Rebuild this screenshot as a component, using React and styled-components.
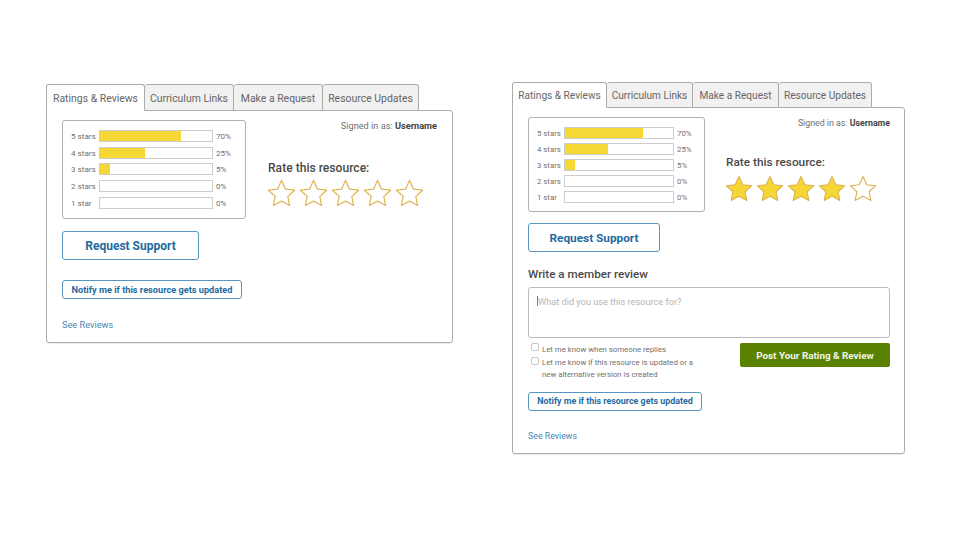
import React from "react";
import styled, { createGlobalStyle } from "styled-components";

const GlobalStyle = createGlobalStyle`
  html, body {
    margin: 0;
    background: #fff;
    font-family: Roboto, "Liberation Sans", sans-serif;
    color: #555;
  }
`;

const Page = styled.div`
  display: flex;
  align-items: flex-start;
  width: 960px;
  height: 540px;
  overflow: hidden;
`;

const Widget = styled.section`
  width: ${(p) => (p.$wide ? 393 : 407)}px;
  margin-left: ${(p) => (p.$wide ? 59 : 46)}px;
  margin-top: ${(p) => (p.$wide ? 82 : 84)}px;
`;

const Tabs = styled.div`
  display: flex;
  height: ${(p) => (p.$wide ? 26 : 27)}px;
  position: relative;
  z-index: 1;
  margin-bottom: -1px;
`;

const Tab = styled.div`
  box-sizing: border-box;
  width: ${(p) => p.$w}px;
  padding-top: 1px;
  display: flex;
  align-items: center;
  justify-content: center;
  font-size: ${(p) => (p.$wide ? 10.15 : 10.45)}px;
  color: #666;
  border: 1px solid #ababab;
  border-left-width: ${(p) => (p.$first ? 1 : 0)}px;
  border-radius: 3px 3px 0 0;
  background: ${(p) => (p.$active ? "#fff" : "#f1f1f1")};
  border-bottom-color: ${(p) => (p.$active ? "#fff" : "#ababab")};
`;

const Panel = styled.div`
  box-sizing: border-box;
  height: ${(p) => (p.$wide ? 347 : 233)}px;
  border: 1px solid #ababab;
  border-radius: 0 3px 3px 3px;
  box-shadow: 0 1px 1px rgba(0, 0, 0, 0.08);
  padding: ${(p) => (p.$wide ? "9px 14px 0 15px" : "9px 15px 0 15px")};
`;

const TopRow = styled.div`
  display: flex;
  align-items: flex-start;
`;

const StatsBox = styled.div`
  box-sizing: border-box;
  flex: none;
  width: ${(p) => (p.$wide ? 177 : 184)}px;
  height: ${(p) => (p.$wide ? 95 : 99)}px;
  border: 1px solid #b0b0b0;
  border-radius: 3px;
  padding: 7px 0 0 8px;
`;

const StatRow = styled.div`
  display: flex;
  align-items: center;
  height: ${(p) => (p.$wide ? 16 : 16.6)}px;
  font-size: ${(p) => (p.$wide ? 7.8 : 8.1)}px;
  color: #707070;
`;

const StatLabel = styled.span`
  width: ${(p) => (p.$wide ? 27 : 28)}px;
  flex: none;
`;

const BarTrack = styled.div`
  box-sizing: border-box;
  width: ${(p) => (p.$wide ? 110 : 114)}px;
  height: 12px;
  flex: none;
  border: 1px solid #cdcdcd;
  background: #fff;
`;

const BarFill = styled.div`
  height: 100%;
  background: #f5d835;
`;

const StatPct = styled.span`
  margin-left: 3px;
`;

const RateArea = styled.div`
  flex: 1;
  display: flex;
  flex-direction: column;
`;

const SignedIn = styled.div`
  align-self: flex-end;
  font-size: ${(p) => (p.$wide ? 8.8 : 9.2)}px;
  line-height: 12px;
  color: #707070;

  b {
    color: #444;
    font-weight: 700;
  }
`;

const RateTitle = styled.div`
  font-size: ${(p) => (p.$wide ? 11.8 : 12.1)}px;
  font-weight: 500;
  line-height: 16px;
  color: #4a4a4a;
  margin: ${(p) => (p.$wide ? "25px 0 5px 21px" : "28px 0 3px 22px")};
`;

const Stars = styled.div`
  display: flex;
  margin-left: ${(p) => (p.$wide ? 20 : 21)}px;
`;

const RequestButton = styled.div`
  box-sizing: border-box;
  width: ${(p) => (p.$wide ? 132 : 137)}px;
  height: 29px;
  margin-top: ${(p) => (p.$wide ? 11 : 12)}px;
  border: 1px solid #5896c0;
  border-radius: 3px;
  color: #1f6a9f;
  font-size: ${(p) => (p.$wide ? 11.8 : 12)}px;
  font-weight: 700;
  display: flex;
  align-items: center;
  justify-content: center;
`;

const NotifyButton = styled.div`
  box-sizing: border-box;
  width: ${(p) => (p.$wide ? 174 : 180)}px;
  height: 19px;
  margin-top: ${(p) => (p.$wide ? 9.5 : 20)}px;
  border: 1px solid #5896c0;
  border-radius: 3px;
  color: #1f6a9f;
  font-size: ${(p) => (p.$wide ? 8.9 : 9.2)}px;
  font-weight: 700;
  display: flex;
  align-items: center;
  justify-content: center;
`;

const SeeReviews = styled.div`
  font-size: ${(p) => (p.$wide ? 8.8 : 9.2)}px;
  line-height: 12px;
  color: #4a87b3;
  margin-top: ${(p) => (p.$wide ? 19 : 20)}px;
`;

const ReviewTitle = styled.div`
  font-size: 11.7px;
  font-weight: 500;
  line-height: 14px;
  color: #4a4a4a;
  margin-top: 15px;
`;

const ReviewBox = styled.div`
  box-sizing: border-box;
  height: 51px;
  margin-top: 6px;
  padding: 8px 8px;
  border: 1px solid #bcbcbc;
  border-radius: 3px;
  font-size: 9.2px;
  line-height: 11px;
  color: #b5b5b5;
  display: flex;
  align-items: flex-start;
`;

const Caret = styled.span`
  flex: none;
  width: 1px;
  height: 10px;
  background: #777;
`;

const FormRow = styled.div`
  display: flex;
  justify-content: space-between;
  align-items: flex-start;
  margin-top: 5px;
`;

const Checks = styled.div`
  width: 175px;
  margin-left: 2.5px;
`;

const CheckRow = styled.label`
  display: flex;
  align-items: flex-start;
  font-size: 7.8px;
  line-height: 12px;
  color: #707070;
  margin-bottom: 1px;
`;

const CheckBox = styled.span`
  box-sizing: border-box;
  flex: none;
  width: 8px;
  height: 8px;
  margin: 0 3.5px 0 0;
  border: 1px solid #c8c8c8;
  border-radius: 2px;
`;

const CheckText = styled.span`
  margin-top: 0.5px;
`;

const PostButton = styled.div`
  width: 150px;
  height: 24px;
  background: #5a8200;
  border-radius: 2px;
  color: #f1f4e6;
  font-size: 9.9px;
  font-weight: 700;
  display: flex;
  align-items: center;
  justify-content: center;
`;

const STAR_PATH =
  "M14.5 1.6 L18.4 10.1 L27.6 11.2 L20.8 17.4 L22.6 26.5 L14.5 22 L6.4 26.5 L8.2 17.4 L1.4 11.2 L10.6 10.1 Z";

function Star({ filled, size, gap }) {
  return (
    <svg
      width={size}
      height={size}
      viewBox="0 0 29 29"
      style={{ marginRight: gap, flex: "none" }}
    >
      <path
        d={STAR_PATH}
        fill={filled ? "#f5d835" : "#fff"}
        stroke="#dfb352"
        strokeWidth="1.2"
        strokeLinejoin="round"
      />
    </svg>
  );
}

const tabNames = [
  "Ratings & Reviews",
  "Curriculum Links",
  "Make a Request",
  "Resource Updates",
];

// the bars in the design aren't drawn to scale, so fill is kept apart from the label
const stats = [
  ["5 stars", 70, 72],
  ["4 stars", 25, 40],
  ["3 stars", 5, 9],
  ["2 stars", 0, 0],
  ["1 star", 0, 0],
];

function Stats({ wide }) {
  return (
    <StatsBox $wide={wide}>
      {stats.map(([label, pct, fill]) => (
        <StatRow key={label} $wide={wide}>
          <StatLabel $wide={wide}>{label}</StatLabel>
          <BarTrack $wide={wide}>
            <BarFill style={{ width: `${fill}%` }} />
          </BarTrack>
          <StatPct>{pct}%</StatPct>
        </StatRow>
      ))}
    </StatsBox>
  );
}

function RatingWidget({ wide, tabWidths, filled }) {
  return (
    <Widget $wide={wide}>
      <Tabs $wide={wide}>
        {tabNames.map((name, i) => (
          <Tab
            key={name}
            $w={tabWidths[i]}
            $wide={wide}
            $first={i === 0}
            $active={i === 0}
          >
            {name}
          </Tab>
        ))}
      </Tabs>
      <Panel $wide={wide}>
        <TopRow>
          <Stats wide={wide} />
          <RateArea>
            <SignedIn $wide={wide}>
              Signed in as: <b>Username</b>
            </SignedIn>
            <RateTitle $wide={wide}>Rate this resource:</RateTitle>
            <Stars $wide={wide}>
              {[0, 1, 2, 3, 4].map((i) => (
                <Star
                  key={i}
                  filled={i < filled}
                  size={wide ? 28 : 29}
                  gap={3}
                />
              ))}
            </Stars>
          </RateArea>
        </TopRow>
        <RequestButton $wide={wide}>Request Support</RequestButton>
        {wide && (
          <>
            <ReviewTitle>Write a member review</ReviewTitle>
            <ReviewBox>
              <Caret />
              What did you use this resource for?
            </ReviewBox>
            <FormRow>
              <Checks>
                <CheckRow>
                  <CheckBox />
                  <CheckText>Let me know when someone replies</CheckText>
                </CheckRow>
                <CheckRow>
                  <CheckBox />
                  <CheckText>
                    Let me know if this resource is updated or a new alternative
                    version is created
                  </CheckText>
                </CheckRow>
              </Checks>
              <PostButton>Post Your Rating &amp; Review</PostButton>
            </FormRow>
          </>
        )}
        <NotifyButton $wide={wide}>Notify me if this resource gets updated</NotifyButton>
        <SeeReviews $wide={wide}>See Reviews</SeeReviews>
      </Panel>
    </Widget>
  );
}

export default function App() {
  return (
    <>
      <GlobalStyle />
      <Page>
        <RatingWidget tabWidths={[99, 89, 89, 96]} filled={0} />
        <RatingWidget wide tabWidths={[95, 86, 86, 93]} filled={4} />
      </Page>
    </>
  );
}
